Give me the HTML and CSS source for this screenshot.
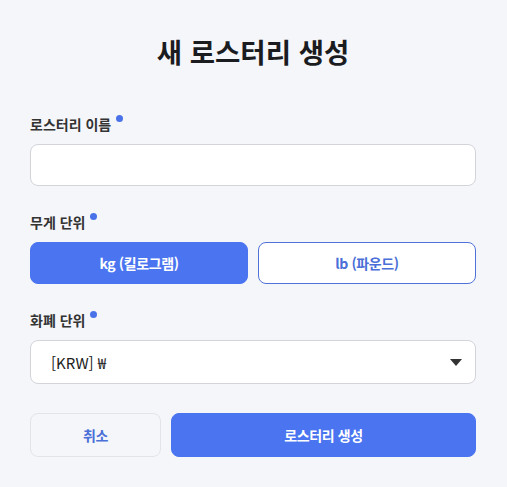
FILE: index.html
```html
<!DOCTYPE html>
<html lang="ko">
<head>
<meta charset="utf-8">
<link rel="stylesheet" href="styles.css">
</head>
<body>
<div class="page">
  <h1 class="title">새 로스터리 생성</h1>
  <div class="field">
    <label class="label">로스터리 이름<span class="dot"></span></label>
    <input class="input" type="text">
  </div>
  <div class="field">
    <label class="label">무게 단위<span class="dot"></span></label>
    <div class="toggle">
      <button class="btn btn-primary">kg (킬로그램)</button>
      <button class="btn btn-outline">lb (파운드)</button>
    </div>
  </div>
  <div class="field">
    <label class="label">화폐 단위<span class="dot"></span></label>
    <div class="select">
      <span class="select-text">[KRW] ₩</span>
      <svg class="caret" width="12" height="7" viewBox="0 0 12 7"><path d="M0 0H12L6 7Z" fill="#333"/></svg>
    </div>
  </div>
  <div class="actions">
    <button class="btn btn-cancel">취소</button>
    <button class="btn btn-primary btn-create">로스터리 생성</button>
  </div>
</div>
</body>
</html>
```
FILE: styles.css
```css
* { box-sizing: border-box; }
html, body {
  margin: 0;
  background: #f5f6fa;
  font-family: "Noto Sans CJK KR", "Noto Sans", sans-serif;
  color: #222;
}
.page {
  padding: 31px 31px 0 30px;
  display: flex;
  flex-direction: column;
}
.title {
  margin: 0 0 43px;
  text-align: center;
  font-size: 27.5px;
  font-weight: 700;
  line-height: 40px;
  color: #1b1c1f;
}
.field {
  display: flex;
  flex-direction: column;
  margin-bottom: 26px;
}
.label {
  display: flex;
  align-items: flex-start;
  font-size: 14px;
  font-weight: 700;
  color: #333;
  line-height: 20px;
  margin-bottom: 10px;
}
.dot {
  width: 7px;
  height: 7px;
  border-radius: 50%;
  background: #4a72e8;
  margin-left: 5px;
  margin-top: 1px;
}
.input {
  height: 42px;
  border: 1px solid #d2d4d9;
  border-radius: 8px;
  background: #fff;
  outline: none;
}
.toggle {
  display: grid;
  grid-template-columns: 1fr 1fr;
  gap: 10px;
}
.btn {
  height: 42px;
  border-radius: 8px;
  font-family: inherit;
  font-size: 14px;
  font-weight: 700;
  letter-spacing: -0.4px;
  cursor: pointer;
}
.btn-primary {
  background: #4a74f0;
  border: 1px solid #4a74f0;
  color: #fff;
}
.btn-outline {
  background: #fff;
  border: 1px solid #4f72d8;
  color: #4a6fd8;
}
.select {
  height: 44px;
  border: 1px solid #d2d4d9;
  border-radius: 8px;
  background: #fff;
  display: flex;
  align-items: center;
  justify-content: space-between;
  padding: 0 13px 0 20px;
}
.select-text {
  font-size: 15px;
  color: #222;
}
.actions {
  display: grid;
  grid-template-columns: 131px 1fr;
  gap: 10px;
  margin-top: 3px;
}
.btn-cancel {
  height: 44px;
  background: #f5f6fa;
  border: 1px solid #e2e4e9;
  color: #4a6fd8;
}
.btn-create { height: 44px; }
```
